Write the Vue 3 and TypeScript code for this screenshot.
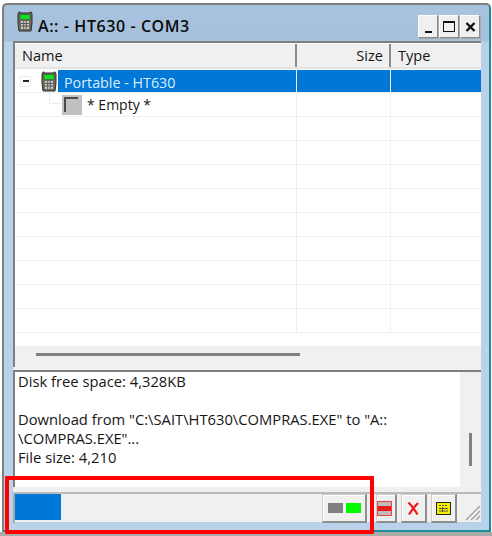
<script setup lang="ts">
const rows: number[] = Array.from({ length: 9 }, (_, i) => i)
const logLines: string[] = [
  'Disk free space: 4,328KB',
  '\u00a0',
  'Download from "C:\\SAIT\\HT630\\COMPRAS.EXE" to "A::',
  '\\COMPRAS.EXE"...',
  'File size: 4,210',
]
</script>

<template>
  <div class="page">
    <div class="window">
      <div class="titlebar">
        <svg class="title-icon" width="16" height="21" viewBox="0 0 16 21">
          <path d="M2 1h1v1h10V1h1l1 2v9l-1 8H2L1 12V3z" fill="#6e6a5c" stroke="#2e2e2a" />
          <rect x="3" y="3.500" width="10" height="5" fill="#10e020" stroke="#3c5a3c" stroke-width=".6" />
          <rect x="4" y="10" width="8" height="8" fill="#c8c8c8" />
          <path d="M4 12.500h8M4 15h8M6.700 10v8M9.300 10v8" stroke="#444" stroke-width=".8" />
        </svg>
        <span class="title-text">A:: - HT630 - COM3</span>
        <div class="win-buttons">
          <button class="win-btn"><span class="min-mark"></span></button>
          <button class="win-btn"><span class="max-mark"></span></button>
          <button class="win-btn close-btn">
            <svg width="11" height="10" viewBox="0 0 11 10"><path d="M1.500 1l8 8M9.500 1l-8 8" stroke="#111" stroke-width="2.400" /></svg>
          </button>
        </div>
      </div>

      <div class="client">
        <div class="list-pane">
          <div class="list-head">
            <div class="head-cell col-name">Name</div>
            <div class="head-cell col-size">Size</div>
            <div class="head-cell col-type">Type</div>
          </div>
          <div class="list-body">
            <div class="row row-first">
              <div class="cell col-name tree-cell">
                <span class="expander"><span class="expander-mark"></span></span>
                <svg class="node-icon" width="16" height="21" viewBox="0 0 16 21">
                  <path d="M2 1h1v1h10V1h1l1 2v9l-1 8H2L1 12V3z" fill="#6e6a5c" stroke="#2e2e2a" />
                  <rect x="3" y="3.500" width="10" height="5" fill="#10e020" stroke="#3c5a3c" stroke-width=".6" />
                  <rect x="4" y="10" width="8" height="8" fill="#c8c8c8" />
                  <path d="M4 12.500h8M4 15h8M6.700 10v8M9.300 10v8" stroke="#444" stroke-width=".8" />
                </svg>
                <span class="selected-label">Portable - HT630</span>
              </div>
              <div class="cell col-size selected-cell"></div>
              <div class="cell col-type selected-cell"></div>
            </div>
            <div class="row">
              <div class="cell col-name child-cell">
                <span class="branch"></span>
                <span class="empty-icon"><span class="empty-corner"></span></span>
                <span class="empty-label">* Empty *</span>
              </div>
              <div class="cell col-size"></div>
              <div class="cell col-type"></div>
            </div>
            <div v-for="r in rows" :key="r" class="row">
              <div class="cell col-name"></div>
              <div class="cell col-size"></div>
              <div class="cell col-type"></div>
            </div>
          </div>
          <div class="hscroll"><span class="hscroll-thumb"></span></div>
        </div>

        <div class="log-pane">
          <div class="log-text">
            <div v-for="(l, i) in logLines" :key="i" class="log-line">{{ l }}</div>
          </div>
          <div class="vscroll"><span class="vscroll-thumb"></span></div>
        </div>

        <div class="status-bar">
          <div class="progress"><span class="progress-fill"></span></div>
          <button class="tool-btn tool-wide">
            <span class="led led-gray"></span><span class="led led-green"></span>
          </button>
          <button class="tool-btn tool-stop">
            <span class="stop-icon"><span class="stop-bar"></span></span>
          </button>
          <button class="tool-btn">
            <svg width="15" height="15" viewBox="0 0 15 15"><path d="M2.500 1.500c3 3 6 7 9 12M12 2C9 5 6 9 3 13.500" fill="none" stroke="#f01818" stroke-width="2.200" /></svg>
          </button>
          <button class="tool-btn">
            <svg width="15" height="13" viewBox="0 0 15 13">
              <rect x=".5" y=".5" width="14" height="12" fill="#f4f000" stroke="#222" />
              <path d="M3 3.500h2M6 3.500h2M9 3.500h2M3 6.500h9M3 9h9M6.500 5v5" stroke="#555" />
            </svg>
          </button>
          <svg class="grip" width="16" height="16" viewBox="0 0 16 16">
            <path d="M15 1L1 15M15 6L6 15M15 11l-4 4" stroke="#9a9a9a" stroke-width="1.200" />
          </svg>
        </div>
      </div>
    </div>
    <div class="highlight"></div>
  </div>
</template>

<style>
html, body { margin: 0; background: #fff; }
</style>

<style scoped>
.page {
  position: relative;
  width: 492px;
  height: 536px;
  overflow: hidden;
  background: linear-gradient(180deg, #fff 0, #fff 532px, #ababab 532px);
  font-family: "Open Sans", "Noto Sans", sans-serif;
  color: #161616;
  padding: 3px 1px 0 2px;
  box-sizing: border-box;
}
.window {
  height: 529px;
  box-sizing: border-box;
  border: 2px solid #7f7f7f;
  border-right: 2px solid #1e8c96;
  border-bottom: 2px solid #1e8c96;
  border-radius: 5px 5px 0 0;
  background: linear-gradient(180deg, #a9c3df 0, #a5c0dc 36px, #b9d2ea 37px);
  padding: 0 8px 8px 9px;
  display: flex;
  flex-direction: column;
}
.titlebar {
  height: 34px;
  display: flex;
  align-items: center;
  flex: none;
  box-sizing: border-box;
  padding-right: 1px;
}
.title-icon { margin: -1px 0 0 4px; flex: none; }
.title-text {
  margin: 7px 0 0 5px;
  font-size: 16px;
  font-weight: 600;
  color: #0c0c0c;
  letter-spacing: .58px;
}
.win-buttons { margin-left: auto; display: flex; gap: 1px; margin-top: 9px; }
.win-btn {
  width: 20px;
  height: 23px;
  padding: 0;
  background: #f0f0f0;
  border: 1px solid;
  border-color: #fbfbfb #8a8a8a #8a8a8a #fbfbfb;
  box-shadow: 1px 1px 0 #a8a8a8;
  display: flex;
  align-items: center;
  justify-content: center;
  position: relative;
  box-sizing: border-box;
}
.min-mark { width: 7px; height: 2px; background: #111; margin-top: 10px; }
.max-mark { width: 12px; height: 11px; border: 1px solid #111; border-top-width: 2px; box-sizing: border-box; }
.client {
  flex: 1;
  min-height: 0;
  display: flex;
  flex-direction: column;
  background: #f0f0f0;
  margin-top: 2px;
}
.list-pane {
  flex: none;
  height: 326px;
  box-sizing: border-box;
  border-top: 2px solid #7f7f7f;
  border-left: 2px solid #7f7f7f;
  background: #fff;
  display: flex;
  flex-direction: column;
}
.list-head {
  height: 23px;
  display: flex;
  background: #f0f0f0;
  border-bottom: 2px solid #e4e4e4;
  border-top: 1px solid #fafafa;
  flex: none;
}
.head-cell {
  font-size: 14.600px;
  line-height: 22px;
  box-sizing: border-box;
  border-right: 2px solid #8c8c8c;
}
.head-cell.col-name { padding-left: 7px; }
.head-cell.col-size { text-align: right; padding-right: 6px; }
.head-cell.col-type { padding-left: 7px; border-right: 0; }
.col-name { width: 282px; flex: none; }
.col-size { width: 94px; flex: none; }
.col-type { flex: 1; min-width: 0; }
.list-body { height: 277px; overflow: hidden; flex: none; }
.row {
  height: 24px;
  display: flex;
  box-sizing: border-box;
  border-bottom: 1px solid #f0f0f0;
}
.cell {
  box-sizing: border-box;
  border-right: 1px solid #f0f0f0;
  display: flex;
  align-items: center;
  font-size: 14.300px;
  white-space: nowrap;
}
.col-type.cell { border-right: 0; }
.row-first { margin-top: 1px; height: 23px; }
.tree-cell { padding-left: 5px; }
.expander {
  width: 11px;
  height: 11px;
  border: 1px solid #ededed;
  display: flex;
  align-items: center;
  justify-content: center;
  flex: none;
  box-sizing: border-box;
}
.expander-mark { width: 6px; height: 2px; background: #222; }
.node-icon { margin-left: 10px; flex: none; }
.selected-label {
  flex: 1;
  height: 22px;
  line-height: 25px;
  margin-left: 1px;
  padding-left: 6px;
  background: #0078d7;
  color: #dbeeff;
}
.selected-cell { background: #0078d7; }
.child-cell { padding-left: 34px; position: relative; }
.branch {
  width: 13px;
  height: 12px;
  box-sizing: border-box;
  border-left: 1px solid #ececec;
  border-bottom: 1px solid #ececec;
  margin-top: -13px;
  flex: none;
}
.empty-icon {
  width: 20px;
  height: 20px;
  background: #c0c0c0;
  flex: none;
  position: relative;
}
.empty-corner {
  position: absolute;
  left: 2px;
  top: 2px;
  width: 14px;
  height: 15px;
  border-left: 2px solid #4a4a4a;
  border-top: 2px solid #4a4a4a;
  box-sizing: border-box;
}
.empty-label { margin-left: 5px; font-size: 14px; }
.hscroll {
  flex: 1;
  min-height: 0;
  background: #f0f0f0;
  display: flex;
  align-items: center;
  padding-left: 21px;
}
.hscroll-thumb { width: 264px; height: 3px; background: #808080; margin-top: -4px; }
.log-pane {
  flex: none;
  height: 117px;
  margin-top: 3px;
  display: flex;
  box-sizing: border-box;
  border-top: 2px solid #7f7f7f;
  border-left: 2px solid #7f7f7f;
  background: #fff;
}
.log-text {
  flex: 1;
  min-width: 0;
  padding: 0 0 0 3px;
  font-size: 14.750px;
  line-height: 18.900px;
  white-space: nowrap;
}
.vscroll {
  width: 21px;
  flex: none;
  background: #f0f0f0;
  display: flex;
  justify-content: center;
  align-items: flex-start;
}
.vscroll-thumb { width: 3px; height: 33px; background: #808080; margin-top: 61px; }
.status-bar {
  flex: 1;
  min-height: 0;
  margin-top: 5px;
  border-top: 2px solid #bbb;
  background: #f0f0f0;
  display: flex;
  align-items: flex-start;
  position: relative;
}
.progress {
  width: 307px;
  height: 29px;
  box-sizing: border-box;
  border-left: 2px solid #a8a8a8;
  padding: 0;
  flex: none;
}
.progress-fill { display: block; width: 46px; height: 26px; background: #0078d7; }
.tool-btn {
  width: 26px;
  height: 29px;
  padding: 0;
  margin-left: 4px;
  background: #f0f0f0;
  border-style: solid;
  border-width: 1px 2px 2px 1px;
  border-color: #cfcfcf #8e8e8e #8e8e8e #cfcfcf;
  box-shadow: inset 1px 1px 0 #fff;
  display: flex;
  align-items: center;
  justify-content: center;
  gap: 3px;
  flex: none;
  box-sizing: border-box;
}
.tool-wide { width: 45px; margin-left: 2px; }
.tool-stop { width: 21px; margin-left: 9px; padding-right: 3px; }
.led { width: 15px; height: 10px; }
.led-gray { background: #808080; }
.led-green { background: #00fa00; }
.stop-icon {
  width: 15px;
  height: 15px;
  flex: none;
  box-sizing: border-box;
  border: 1px solid #f04040;
  background: #bdbdbd;
  display: flex;
  align-items: center;
}
.stop-bar { width: 100%; height: 5px; background: #f01818; }
.grip { position: absolute; right: 0; bottom: 1px; }
.highlight {
  position: absolute;
  left: 5px;
  top: 476px;
  width: 369px;
  height: 58px;
  box-sizing: border-box;
  border: 4px solid #ff0000;
  border-radius: 1px;
  pointer-events: none;
}
</style>
